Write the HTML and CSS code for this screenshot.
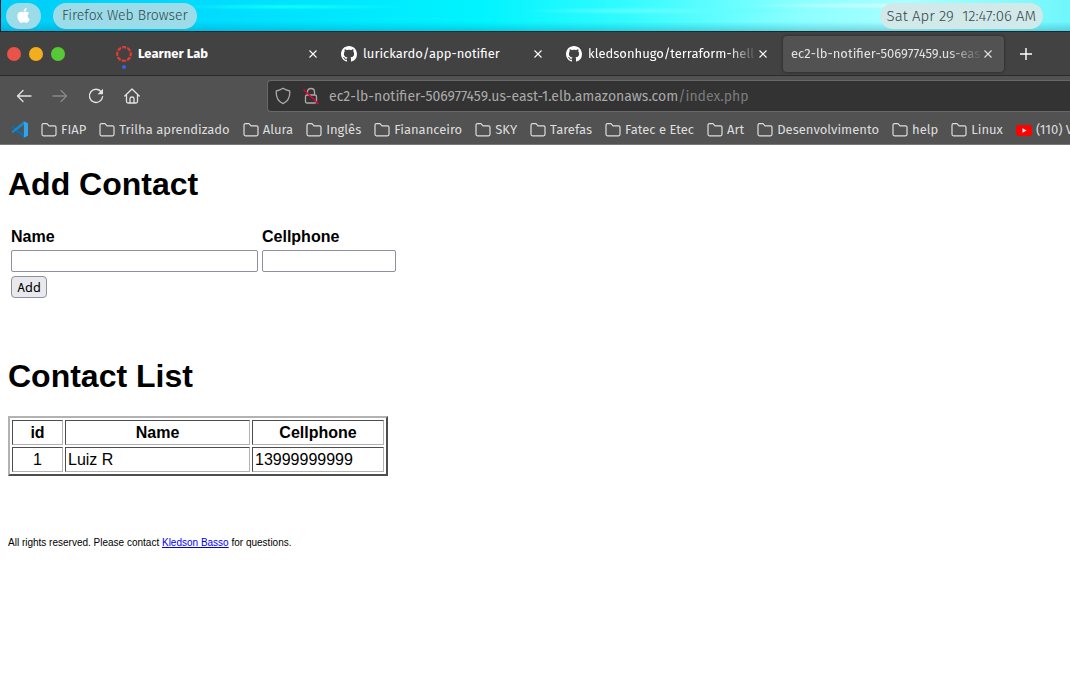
FILE: index.html
```html
<!DOCTYPE html>
<html lang="en">
<head>
<meta charset="utf-8">
<title>Contacts</title>
<link rel="stylesheet" href="styles.css">
</head>
<body>
<svg class="defs" aria-hidden="true">
  <symbol id="folder" viewBox="0 0 16 16"><path d="M1 12.3V3.2Q1 1.7 2.5 1.7H6L8 3.8H13.5Q15 3.8 15 5.3V12.3Q15 13.8 13.5 13.8H2.5Q1 13.8 1 12.3Z" fill="none" stroke="currentColor" stroke-width="1.2" stroke-linejoin="round"/></symbol>
  <symbol id="close" viewBox="0 0 10 10"><path d="M1.500 1.500L8.500 8.500M8.500 1.500L1.500 8.500" stroke="currentColor" stroke-width="1.1" fill="none"/></symbol>
  <symbol id="github" viewBox="0 0 16 16"><path fill="currentColor" d="M8 0C3.58 0 0 3.58 0 8c0 3.54 2.29 6.53 5.47 7.59.4.07.55-.17.55-.38 0-.19-.01-.82-.01-1.49-2.01.37-2.53-.49-2.69-.94-.09-.23-.48-.94-.82-1.13-.28-.15-.68-.52-.01-.53.63-.01 1.08.58 1.23.82.72 1.21 1.87.87 2.33.66.07-.52.28-.87.51-1.07-1.78-.2-3.64-.89-3.64-3.95 0-.87.31-1.59.82-2.15-.08-.2-.36-1.02.08-2.12 0 0 .67-.21 2.2.82.64-.18 1.32-.27 2-.27s1.36.09 2 .27c1.53-1.04 2.2-.82 2.2-.82.44 1.1.16 1.92.08 2.12.51.56.82 1.27.82 2.15 0 3.07-1.87 3.75-3.65 3.95.29.25.54.73.54 1.48 0 1.07-.01 1.93-.01 2.2 0 .21.15.46.55.38A8.01 8.01 0 0 0 16 8c0-4.42-3.58-8-8-8z"/></symbol>
</svg>

<header class="desktop-bar">
  <button class="pill apple" aria-label="System menu"><svg viewBox="0 0 384 512" width="13" height="17"><path fill="#fff" d="M318.7 268.7c-.2-36.7 16.4-64.4 50-84.8-18.8-26.9-47.2-41.7-84.7-44.6-35.5-2.8-74.3 20.7-88.5 20.7-15 0-49.4-19.7-76.4-19.7C63.3 141.2 4 184.8 4 273.5q0 39.3 14.4 81.2c12.8 36.7 59 126.7 107.2 125.2 25.2-.6 43-17.9 75.8-17.9 31.8 0 48.3 17.9 76.4 17.9 48.6-.7 90.4-82.5 102.6-119.3-65.2-30.7-61.7-90-61.7-91.9zm-56.6-164.2c27.3-32.4 24.8-61.9 24-72.5-24.1 1.4-52 16.4-67.9 34.9-17.5 19.8-27.8 44.3-25.6 71.9 26.1 2 49.9-11.4 69.5-34.3z"/></svg></button>
  <button class="pill app-name">Firefox Web Browser</button>
  <time class="pill clock">Sat Apr 29&nbsp; 12:47:06 AM</time>
</header>

<div class="tab-bar">
  <div class="window-buttons">
    <button class="dot red" aria-label="Close window"></button>
    <button class="dot amber" aria-label="Minimize window"></button>
    <button class="dot green" aria-label="Maximize window"></button>
  </div>
  <div class="tabs">
    <div class="tab bold">
      <span class="learner"><svg viewBox="0 0 16 16" width="16" height="16"><circle cx="8" cy="8" r="6.8" fill="none" stroke="#e03c31" stroke-width="2.3" stroke-dasharray="4.2 1.14" stroke-dashoffset="2.1"/></svg></span>
      <span class="tab-title">Learner Lab</span>
      <button class="tab-close" aria-label="Close tab"><svg width="10" height="10"><use href="#close"/></svg></button>
    </div>
    <div class="tab">
      <svg width="16" height="16"><use href="#github"/></svg>
      <span class="tab-title">lurickardo/app-notifier</span>
      <button class="tab-close" aria-label="Close tab"><svg width="10" height="10"><use href="#close"/></svg></button>
    </div>
    <div class="tab">
      <svg width="16" height="16"><use href="#github"/></svg>
      <span class="tab-title fade">kledsonhugo/terraform-hell</span>
      <button class="tab-close" aria-label="Close tab"><svg width="10" height="10"><use href="#close"/></svg></button>
    </div>
    <div class="tab active">
      <span class="tab-title fade">ec2-lb-notifier-506977459.us-eas</span>
      <button class="tab-close" aria-label="Close tab"><svg width="10" height="10"><use href="#close"/></svg></button>
    </div>
  </div>
  <button class="new-tab" aria-label="New tab"><svg viewBox="0 0 12 12" width="12" height="12"><path d="M6 0V12M0 6H12" stroke="#fff" stroke-width="1.4"/></svg></button>
</div>

<div class="nav-bar">
  <button class="tool" aria-label="Back"><svg viewBox="0 0 16 16" width="16" height="16"><path d="M15 8H1.5M7 2.5L1.5 8L7 13.5"/></svg></button>
  <button class="tool dim" aria-label="Forward"><svg viewBox="0 0 16 16" width="16" height="16"><path d="M1 8H14.5M9 2.5L14.5 8L9 13.5"/></svg></button>
  <button class="tool" aria-label="Reload"><svg viewBox="0 0 16 16" width="16" height="16"><path d="M13.4 4A6.6 6.6 0 1 0 14.6 8.6"/><path class="solid" d="M15 .8V6.2H9.6Z"/></svg></button>
  <button class="tool" aria-label="Home"><svg viewBox="0 0 16 16" width="16" height="16"><path d="M.8 8L8 1L15.2 8M2.5 7V13.5Q2.5 15 4 15H12Q13.5 15 13.5 13.5V7M6 15V10.5Q6 9 8 9Q10 9 10 10.5V15"/></svg></button>
  <div class="address">
    <svg viewBox="0 0 16 18" width="16" height="18"><path d="M8 1.2Q11 3 14.7 4Q15.5 13 8 16.7Q.5 13 1.300 4Q5 3 8 1.2Z"/></svg>
    <svg viewBox="0 0 16 18" width="16" height="18"><path d="M2.500 9.5Q2.5 8 4 8H12Q13.5 8 13.5 9.5V14.5Q13.5 16 12 16H4Q2.5 16 2.5 14.5ZM4.5 8V4.8Q4.5 1.5 8 1.5Q11.5 1.5 11.5 4.8V8"/><path class="strike" d="M1 3L15 16.5"/></svg>
    <div class="url">ec2-lb-notifier-506977459.us-east-1.elb.amazonaws.com<span class="url-path">/index.php</span></div>
  </div>
</div>

<nav class="bookmarks" aria-label="Bookmarks">
  <a class="bookmark vscode" href="#" aria-label="VS Code"><svg viewBox="0 0 100 100" width="17" height="17"><path fill="#0871b8" d="M2 37L11 29L76 78V99Z"/><path fill="#168bd2" d="M2 63L11 71L76 22V1Z"/><path fill="#30a5ee" d="M72 0L95 10Q100 12 100 17V83Q100 88 95 90L72 100Q76 98 76 93V7Q76 2 72 0Z"/></svg></a>
  <a class="bookmark" href="#"><svg width="16" height="16"><use href="#folder"/></svg>FIAP</a>
  <a class="bookmark" href="#"><svg width="16" height="16"><use href="#folder"/></svg>Trilha aprendizado</a>
  <a class="bookmark" href="#"><svg width="16" height="16"><use href="#folder"/></svg>Alura</a>
  <a class="bookmark" href="#"><svg width="16" height="16"><use href="#folder"/></svg>Inglês</a>
  <a class="bookmark" href="#"><svg width="16" height="16"><use href="#folder"/></svg>Fiananceiro</a>
  <a class="bookmark" href="#"><svg width="16" height="16"><use href="#folder"/></svg>SKY</a>
  <a class="bookmark" href="#"><svg width="16" height="16"><use href="#folder"/></svg>Tarefas</a>
  <a class="bookmark" href="#"><svg width="16" height="16"><use href="#folder"/></svg>Fatec e Etec</a>
  <a class="bookmark" href="#"><svg width="16" height="16"><use href="#folder"/></svg>Art</a>
  <a class="bookmark" href="#"><svg width="16" height="16"><use href="#folder"/></svg>Desenvolvimento</a>
  <a class="bookmark" href="#"><svg width="16" height="16"><use href="#folder"/></svg>help</a>
  <a class="bookmark" href="#"><svg width="16" height="16"><use href="#folder"/></svg>Linux</a>
  <a class="bookmark" href="#"><svg viewBox="0 0 16 16" width="16" height="16"><rect x="0" y="3" width="16" height="11" rx="3" fill="#f00"/><path d="M6.5 6.2V10.8L10.5 8.5Z" fill="#fff"/></svg>(110) V</a>
</nav>

<main class="page">
  <h1>Add Contact</h1>
  <form>
    <table class="form-table">
      <tr><td><label for="name">Name</label></td><td><label for="phone">Cellphone</label></td></tr>
      <tr><td><input class="name-input" id="name" type="text"></td><td><input class="phone-input" id="phone" type="text"></td></tr>
      <tr><td><button class="add" type="button">Add</button></td></tr>
    </table>
  </form>
  <h1 class="list-title">Contact List</h1>
  <table class="contacts">
    <tr><th class="col-id">id</th><th class="col-name">Name</th><th class="col-phone">Cellphone</th></tr>
    <tr><td class="center">1</td><td>Luiz R</td><td>13999999999</td></tr>
  </table>
  <footer>All rights reserved. Please contact <a href="#">Kledson Basso</a> for questions.</footer>
</main>
</body>
</html>
```
FILE: styles.css
```css
* { box-sizing: border-box; }
body { margin: 0; background: #fff; color: #000; font: 16px "Liberation Sans", Arial, sans-serif; overflow-x: hidden; }
button { font: inherit; color: inherit; border: 0; padding: 0; background: none; }
svg { display: block; flex: none; }
.defs { display: none; }

.desktop-bar, .tab-bar, .nav-bar, .bookmarks { display: flex; align-items: center; font-family: "Fira Sans", "Noto Sans", sans-serif; font-size: 13px; white-space: nowrap; }

.desktop-bar {
  height: 31px; padding: 0 27px 0 5px; gap: 12px; color: #35474b; font-size: 14px;
  border-left: 1px solid #123;
  background:
    radial-gradient(ellipse 140px 4px at 62% 35%, #5fffff, transparent),
    radial-gradient(ellipse 120px 3px at 27% 22%, #1ff, transparent),
    radial-gradient(ellipse 150px 3px at 84% 18%, #d5ffff, transparent),
    linear-gradient(transparent 70%, rgba(0, 120, 170, .3)),
    linear-gradient(90deg, #00cdf5, #00dcff 20%, #00f4ff 45%, #30fbff 58%, #8cffff 75%, #aff 85%, #6ff7fb);
}
.pill { display: flex; align-items: center; justify-content: center; height: 26px; padding: 0 9px; border-radius: 13px; background: #9bdce8; font-weight: 300; }
.apple { width: 35px; padding: 0; }
.clock { margin-left: auto; padding: 0 7px; background: #d1e9e9; font-size: 15px; }

.tab-bar { height: 45px; background: #424242; border-top: 1px solid #252525; border-bottom: 1px solid #2b2b2b; color: #fff; }
.window-buttons { display: flex; gap: 8px; padding: 0 43px 0 7px; }
.dot { width: 14px; height: 14px; border-radius: 50%; }
.red { background: #ea5348; }
.amber { background: #f2ae1c; }
.green { background: #57c936; }
.tabs { display: flex; gap: 4px; }
.tab { display: flex; align-items: center; width: 221px; height: 36px; padding: 0 11px 0 8px; gap: 6px; border-radius: 4px; }
.tab-title { flex: 1; min-width: 0; overflow: hidden; }
.fade { margin-right: -6px; mask-image: linear-gradient(90deg, #000 82%, transparent); }
.bold { font-weight: 700; }
.learner { position: relative; }
.learner::after { content: ""; position: absolute; left: 6px; top: 19px; width: 4px; height: 4px; border-radius: 50%; background: #3560f0; }
.active { background: #525252; color: #e2e2e2; box-shadow: 0 0 3px #222; }
.new-tab { margin-left: 16px; }

.nav-bar { height: 39px; padding-left: 16px; gap: 20px; background: #525252; color: #e3e3e3; }
.tool path, .address path { fill: none; stroke: currentColor; stroke-width: 1.3; stroke-linecap: round; stroke-linejoin: round; }
.tool .solid { fill: currentColor; stroke-width: 0; }
.dim { color: #898989; }
.address { display: flex; align-items: center; flex: 1; gap: 12px; height: 32px; margin: 1px 0 0 107px; padding-left: 7px; background: #333; border: 1px solid #686868; border-right: 0; border-radius: 4px 0 0 4px; color: #aaa; font-size: 14px; }
.address .strike { stroke: #e6003c; stroke-width: 1.5; }
.url { margin-left: -2px; }
.url-path { color: #7c7c7c; }

.bookmarks { height: 30px; padding-left: 11px; gap: 13px; overflow: hidden; background: #525252; border-bottom: 1px solid #777; color: #dedede; }
.bookmark { display: flex; align-items: center; gap: 4px; color: inherit; text-decoration: none; }

.page { display: flow-root; padding: 0 8px; }
h1 { margin: 21px 0; font-size: 32px; line-height: 37px; }
label { font-weight: 700; }
.form-table { border-spacing: 2px; line-height: 19px; }
.form-table td { padding: 1px; }
.form-table input { display: block; height: 22px; border: 1px solid #8f8f9d; border-radius: 2px; background: #fff; padding: 1px 3px; }
.name-input { width: 247px; }
.phone-input { width: 134px; }
.add { display: block; width: 36px; height: 22px; border: 1px solid #8f8f9d; border-radius: 4px; background: #e9e9ed; font: 13px "Noto Sans Mono", "DejaVu Sans Mono", monospace; }
.list-title { margin-top: 57px; }
.contacts { border: 2px solid; border-color: #b2b2b2 #4d4d4d #4d4d4d #b2b2b2; border-spacing: 2px; }
.contacts th, .contacts td { height: 25px; padding: 2px; border: 1px solid; border-color: #4d4d4d #b2b2b2 #b2b2b2 #4d4d4d; }
.col-id { width: 51px; }
.col-name { width: 185px; }
.col-phone { width: 132px; }
.center { text-align: center; }
footer { margin-top: 61px; font-size: 10px; line-height: 12px; }
footer a { color: #00e; }
```
